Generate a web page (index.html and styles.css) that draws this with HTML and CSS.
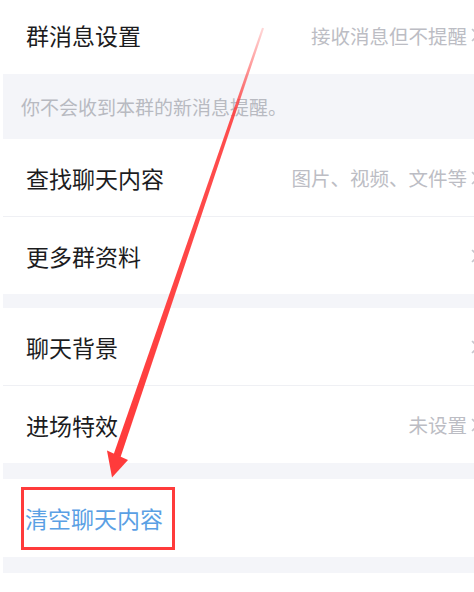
FILE: index.html
```html
<!DOCTYPE html>
<html lang="zh-CN">
<head>
    <meta charset="UTF-8">
    <meta name="viewport" content="width=device-width, initial-scale=1.0">
    <title>群聊设置</title>
    <link rel="stylesheet" href="styles.css">
</head>
<body>
    <div class="page">
        <div class="row row-first">
            <span class="label">群消息设置</span>
            <span class="value">接收消息但不提醒</span>
            <svg class="chev" viewBox="0 0 10 16"><path d="M2 2l6 6-6 6" /></svg>
        </div>
        <div class="note">你不会收到本群的新消息提醒。</div>

        <div class="row">
            <span class="label">查找聊天内容</span>
            <span class="value">图片、视频、文件等</span>
            <svg class="chev" viewBox="0 0 10 16"><path d="M2 2l6 6-6 6" /></svg>
        </div>
        <div class="row">
            <span class="label">更多群资料</span>
            <span class="value"></span>
            <svg class="chev" viewBox="0 0 10 16"><path d="M2 2l6 6-6 6" /></svg>
        </div>
        <div class="gap"></div>

        <div class="row">
            <span class="label">聊天背景</span>
            <span class="value"></span>
            <svg class="chev" viewBox="0 0 10 16"><path d="M2 2l6 6-6 6" /></svg>
        </div>
        <div class="row">
            <span class="label">进场特效</span>
            <span class="value">未设置</span>
            <svg class="chev" viewBox="0 0 10 16"><path d="M2 2l6 6-6 6" /></svg>
        </div>
        <div class="gap gap-wide"></div>

        <div class="row row-danger">
            <span class="mark">清空聊天内容</span>
        </div>
        <div class="gap gap-wide"></div>
    </div>

    <svg class="arrow" width="474" height="592" viewBox="0 0 474 592">
        <defs>
            <linearGradient id="fade" x1="263" y1="28" x2="117" y2="456" gradientUnits="userSpaceOnUse">
                <stop offset="0" stop-color="#ff3b3b" stop-opacity="0.2"/>
                <stop offset="0.2" stop-color="#ff3b3b" stop-opacity="0.9"/>
                <stop offset="1" stop-color="#ff3b3b"/>
            </linearGradient>
        </defs>
        <polygon points="264,28.3 262,27.7 113.5,454.8 120.5,457.2" fill="url(#fade)"/>
        <polygon points="107,450.5 128,460 112,477.5" fill="#ff3b3b"/>
    </svg>
</body>
</html>
```

FILE: styles.css
```css
body {
    margin: 0;
    background: #fff;
    font-family: "Noto Sans CJK SC", "Noto Sans", sans-serif;
    overflow: hidden;
}
.page {
    margin-left: 3px;
}
.row {
    display: flex;
    align-items: center;
    height: 77px;
    padding-left: 23px;
    border-top: 1px solid #eff0f4;
    background: #fff;
}
.row-first {
    box-sizing: border-box;
    height: 74px;
    padding-bottom: 4px;
    border-top: none;
}
.gap + .row,
.note + .row {
    border-top: none;
}
.label {
    font-size: 23px;
    color: #1c1c1e;
    flex: 1;
}
.value {
    font-size: 19.5px;
    color: #bcbdc4;
}
.chev {
    width: 10px;
    height: 16px;
    margin-left: 3px;
    margin-right: -6px;
    flex-shrink: 0;
}
.chev path {
    fill: none;
    stroke: #c6c7cd;
    stroke-width: 1.6;
}
.note {
    height: 65px;
    background: #f4f5f9;
    color: #b8bac1;
    font-size: 19px;
    padding-left: 18px;
    display: flex;
    align-items: center;
}
.gap {
    height: 14px;
    background: #f4f5f9;
}
.gap-wide {
    height: 16px;
}
.row-danger {
    height: 78px;
    padding-left: 18px;
}
.mark {
    display: flex;
    align-items: center;
    box-sizing: border-box;
    height: 63px;
    padding: 0 9px 0 1px;
    border: 3px solid #ff3b3b;
    color: #5aa0e4;
    font-size: 23px;
}
.arrow {
    position: absolute;
    top: 0;
    left: 0;
    pointer-events: none;
}
```
